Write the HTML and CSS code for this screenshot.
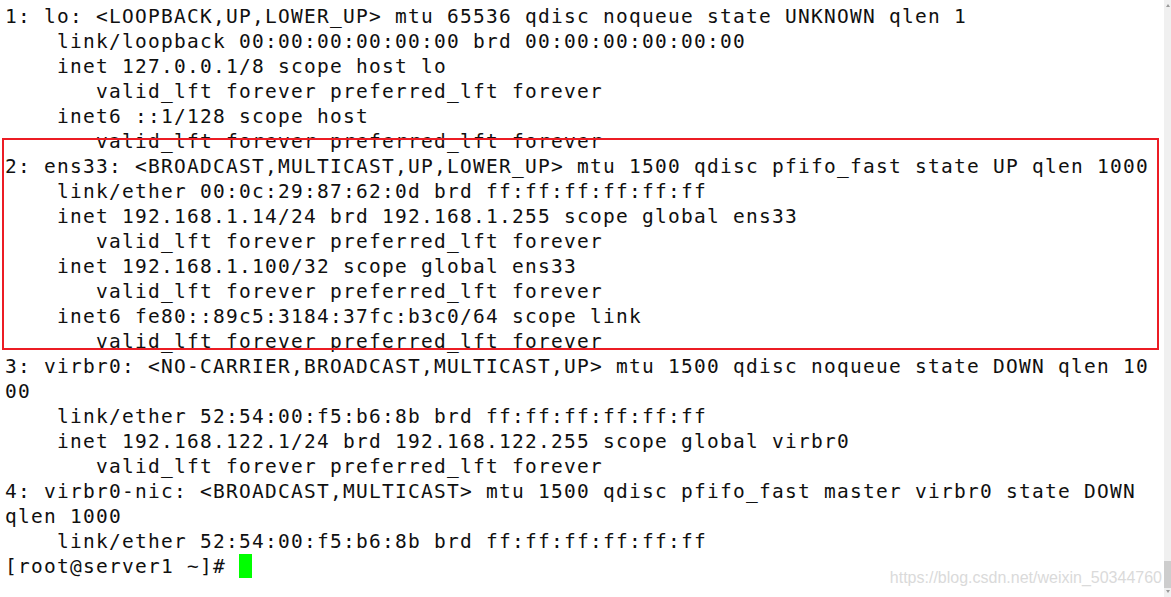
FILE: index.html
```html
<!DOCTYPE html>
<html>
<head>
<meta charset="utf-8">
<link rel="stylesheet" href="styles.css">
</head>
<body>
<div class="screen">
  <main class="term">
<pre class="out">1: lo: &lt;LOOPBACK,UP,LOWER_UP&gt; mtu 65536 qdisc noqueue state UNKNOWN qlen 1
    link/loopback 00:00:00:00:00:00 brd 00:00:00:00:00:00
    inet 127.0.0.1/8 scope host lo
       valid_lft forever preferred_lft forever
    inet6 ::1/128 scope host
       valid_lft forever preferred_lft forever
2: ens33: &lt;BROADCAST,MULTICAST,UP,LOWER_UP&gt; mtu 1500 qdisc pfifo_fast state UP qlen 1000
    link/ether 00:0c:29:87:62:0d brd ff:ff:ff:ff:ff:ff
    inet 192.168.1.14/24 brd 192.168.1.255 scope global ens33
       valid_lft forever preferred_lft forever
    inet 192.168.1.100/32 scope global ens33
       valid_lft forever preferred_lft forever
    inet6 fe80::89c5:3184:37fc:b3c0/64 scope link
       valid_lft forever preferred_lft forever
3: virbr0: &lt;NO-CARRIER,BROADCAST,MULTICAST,UP&gt; mtu 1500 qdisc noqueue state DOWN qlen 10
00
    link/ether 52:54:00:f5:b6:8b brd ff:ff:ff:ff:ff:ff
    inet 192.168.122.1/24 brd 192.168.122.255 scope global virbr0
       valid_lft forever preferred_lft forever
4: virbr0-nic: &lt;BROADCAST,MULTICAST&gt; mtu 1500 qdisc pfifo_fast master virbr0 state DOWN
qlen 1000
    link/ether 52:54:00:f5:b6:8b brd ff:ff:ff:ff:ff:ff
[root@server1 ~]# <span class="cursor"></span></pre>
    <div class="highlight"></div>
    <div class="watermark">https://blog.csdn.net/weixin_50344760</div>
  </main>
  <aside class="scrollbar">
    <span class="arrow up"></span>
    <span class="track"></span>
    <span class="thumb"></span>
    <span class="arrow down"></span>
  </aside>
</div>
</body>
</html>
```

FILE: styles.css
```css
html, body {
  margin: 0;
  padding: 0;
  background: #ffffff;
}

.screen {
  display: flex;
  width: 1171px;
  height: 597px;
  overflow: hidden;
}

.term {
  position: relative;
  flex: 1;
  background: #ffffff;
}

.out {
  margin: 0;
  padding: 4px 0 0 5px;
  font-family: "DejaVu Sans Mono", monospace;
  font-size: 19.5px;
  letter-spacing: 1.26px;
  line-height: 25px;
  color: #101010;
  white-space: pre;
}

.cursor {
  display: inline-block;
  width: 13px;
  height: 24px;
  background: #00ff00;
  vertical-align: top;
}

.highlight {
  position: absolute;
  left: 2px;
  top: 138px;
  width: 1153px;
  height: 208px;
  border: 2px solid #ec1c24;
}

.watermark {
  position: absolute;
  right: 2px;
  bottom: 10px;
  font-family: "Liberation Sans", Arial, sans-serif;
  font-size: 16px;
  line-height: 18px;
  color: #dadada;
}

.scrollbar {
  width: 7px;
  background: #f0f0f0;
  display: flex;
  flex-direction: column;
  align-items: center;
}

.track {
  flex: 1;
}

.thumb {
  align-self: stretch;
  height: 27px;
  background: #cdcdcd;
  margin-bottom: 2px;
}

.arrow {
  width: 0;
  height: 0;
  border-left: 2px solid transparent;
  border-right: 2px solid transparent;
}

.arrow.up {
  margin-top: 4px;
  border-bottom: 3px solid #9a9a9a;
}

.arrow.down {
  margin-bottom: 4px;
  border-top: 3px solid #9a9a9a;
}
```
